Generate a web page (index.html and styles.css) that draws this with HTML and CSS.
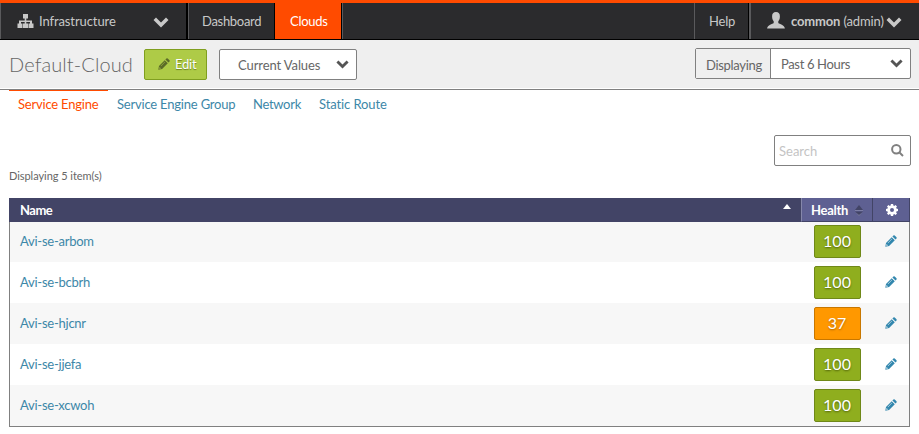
FILE: index.html
```html
<!DOCTYPE html>
<html lang="en">
<head>
<meta charset="utf-8">
<title>Default-Cloud</title>
<link rel="stylesheet" href="styles.css">
</head>
<body>
<svg class="defs" width="0" height="0">
  <symbol id="pencil" viewBox="0 0 12 12"><path fill-rule="evenodd" d="M.3 11.700 1 7.900 6.700 2.200 9.800 5.300 4.100 11zM1.600 9 1.300 10.700 3 10.400zM7.400 1.500 8.400.5Q9.100 0 9.700.5L11.500 2.300Q12 2.900 11.500 3.600L10.500 4.600zM3 8.200 7.100 4.100 6.800 3.800 2.700 7.900z"/></symbol>
  <symbol id="chevron" viewBox="0 0 16 11"><path d="M.5 3 3 .5 8 5.4 13 .5 15.500 3 8 10.500z"/></symbol>
</svg>
<nav class="nav">
  <div class="nav-item infra">
    <svg class="tree" width="17" height="14" viewBox="0 0 17 14"><path d="M6 0h5v4.500H9.300V6.500H15v3h1.500V14h-5V9.500h1.500V8H9.300v1.500H11V14H6V9.500h1.700V8H4v1.500h1.500V14h-5V9.500H2v-3h5.700v-2H6z"/></svg>
    <span class="t-infra">Infrastructure</span>
    <svg class="chev" width="16" height="11"><use href="#chevron"/></svg>
  </div>
  <div class="nav-item dash"><span class="t-dash">Dashboard</span></div>
  <div class="nav-item active"><span class="t-clouds">Clouds</span></div>
  <div class="nav-item filler"></div>
  <div class="nav-item help"><span>Help</span></div>
  <div class="nav-item user">
    <svg class="person" width="18" height="17" viewBox="0 0 18 17"><path d="M9 0C11.600 0 13 1.700 12.900 4.500 12.900 7 12 8.200 11.300 9.200V11C12.500 12.300 17.500 12.700 17.900 16.500H.1C.5 12.700 5.500 12.300 6.700 11V9.200C6 8.200 5.100 7 5.100 4.500 5 1.700 6.400 0 9 0z"/></svg>
    <span class="t-user"><b>common</b> (admin)</span>
    <svg class="chev" width="16" height="11"><use href="#chevron"/></svg>
  </div>
</nav>
<header class="bar">
  <h1>Default-Cloud</h1>
  <button class="edit"><svg width="12" height="12"><use href="#pencil"/></svg><span>Edit</span></button>
  <div class="select values"><span>Current Values</span><svg width="13" height="9"><use href="#chevron"/></svg></div>
  <div class="select range"><label>Displaying</label><span>Past 6 Hours</span><svg width="13" height="9"><use href="#chevron"/></svg></div>
</header>
<div class="tabs">
  <a class="tab current">Service Engine</a>
  <a class="tab group">Service Engine Group</a>
  <a class="tab network">Network</a>
  <a class="tab route">Static Route</a>
</div>
<main>
  <div class="search"><span>Search</span><svg width="13" height="13" viewBox="0 0 13 13"><circle cx="5.300" cy="5.300" r="4.200"/><path d="m8.500 8.500 3.500 3.500"/></svg></div>
  <p class="count">Displaying 5 item(s)</p>
  <div class="table">
    <div class="row head">
      <div class="name">Name<svg class="asc" width="8" height="5" viewBox="0 0 8 5"><path d="M0 5 4 0 8 5z"/></svg></div>
      <div class="health"><span>Health</span><svg width="8" height="11" viewBox="0 0 8 11"><path fill="#424466" d="M0 5 4 0 8 5z"/><path fill="#424466" d="M0 6.500h8L4 11z"/><path fill="#8587aa" d="M0 5h8v.7H0zM0 6.800 4 11 8 6.800 4 10z"/></svg></div>
      <div class="act"><svg width="12" height="12" viewBox="0 0 12 12"><path fill-rule="evenodd" d="M4.900 0h2.200l.3 1.600.8.350L9.500 1 11 2.500l-.9 1.300.35.800 1.550.300v2.200l-1.600.3-.3.800.9 1.300L9.500 11l-1.300-.9-.8.350L7.100 12H4.900l-.3-1.600-.8-.3-1.300.9L1 9.500l.9-1.300-.35-.8L0 7.100V4.900l1.600-.3.3-.8L1 2.500 2.500 1l1.300.9.8-.350zM6 4a2 2 0 1 0 0 4 2 2 0 0 0 0-4z"/></svg></div>
    </div>
    <div class="row first"><a class="name">Avi-se-arbom</a><div class="health"><span class="badge">100</span></div><div class="act"><svg width="12" height="12"><use href="#pencil"/></svg></div></div>
    <div class="row"><a class="name">Avi-se-bcbrh</a><div class="health"><span class="badge">100</span></div><div class="act"><svg width="12" height="12"><use href="#pencil"/></svg></div></div>
    <div class="row"><a class="name">Avi-se-hjcnr</a><div class="health"><span class="badge warn">37</span></div><div class="act"><svg width="12" height="12"><use href="#pencil"/></svg></div></div>
    <div class="row"><a class="name">Avi-se-jjefa</a><div class="health"><span class="badge">100</span></div><div class="act"><svg width="12" height="12"><use href="#pencil"/></svg></div></div>
    <div class="row"><a class="name">Avi-se-xcwoh</a><div class="health"><span class="badge">100</span></div><div class="act"><svg width="12" height="12"><use href="#pencil"/></svg></div></div>
  </div>
</main>
</body>
</html>
```
FILE: styles.css
```css
* { box-sizing: border-box; }
body { margin: 0; height: 434px; overflow: hidden; background: #fff; color: #666; font: 13px/18px Lato, sans-serif; }
svg { display: block; flex: none; fill: currentColor; }
span, label, a { white-space: nowrap; }
.defs { position: absolute; }
.nav { display: flex; height: 40px; border-top: 3px solid #ff4b00; border-bottom: 1px solid #000; background: #2b2b2d; color: #c8c8c8; }
.nav-item { display: flex; align-items: center; border-left: 1px solid #5a5a5c; border-right: 1px solid #000; }
.infra { width: 188px; padding-left: 16px; border-right-width: 2px; }
.tree { margin: 0 5px 0 0; }
.t-infra { width: 114px; letter-spacing: -.1px; }
.chev { margin-top: 3px; }
.dash { width: 87px; padding-left: 13px; letter-spacing: -.3px; }
.nav-item.active { width: 67px; padding-left: 14px; background: #ff4b00; color: #fff; border-left-color: #ff4b00; letter-spacing: -.3px; }
.filler { flex: 1; border-right: 0; }
.help { width: 55px; padding-left: 14px; letter-spacing: -.2px; }
.user { width: 170px; padding-left: 16px; border-left-width: 2px; border-right: 0; }
.person { margin-top: -2px; }
.t-user { width: 95px; margin-left: 6px; letter-spacing: -.15px; }
.bar { display: flex; align-items: center; height: 50px; padding: 0 8px 0 9px; background: #efefef; border-bottom: 1px solid #808080; box-shadow: inset 0 -1px #fff; }
h1 { width: 135px; margin: -2px 0 0; font: 300 20px/28px Lato, sans-serif; letter-spacing: .1px; }
.edit { display: flex; align-items: center; width: 63px; height: 31px; padding: 0 0 0 13px; border: 1px solid #809f20; border-radius: 2px; background: #aecb47; color: #fff; font: inherit; text-shadow: 0 1px 1px #6b8220; letter-spacing: -.2px; }
.edit span { margin-top: -2px; }
.edit svg { color: #5c6b28; margin: -2px 5px 0 0; }
.select { display: flex; align-items: center; height: 31px; background: #fff; border: 1px solid #808080; border-radius: 2px; }
.values { width: 138px; margin-left: 12px; padding-left: 18px; }
.values span { width: 98px; letter-spacing: -.1px; }
.range { width: 216px; margin: -2px 0 0 auto; }
.range label { width: 75px; height: 29px; padding: 7px 0 0 10px; background: #efefef; border-right: 1px solid #808080; letter-spacing: -.3px; }
.range span { width: 110px; padding-left: 10px; margin-right: 9px; letter-spacing: -.35px; }
.select svg { color: #555; }
.tabs { display: flex; height: 27px; padding-left: 9px; color: #3d87a8; }
.tab { padding-top: 5px; }
.tab.group { width: 136px; letter-spacing: -.2px; }
.tab.network { width: 66px; letter-spacing: -.3px; }
.tab.route { letter-spacing: -.1px; }
.tab.current { width: 99px; margin-right: 9px; padding: 4px 0 0 9px; border-top: 1px solid #ff4b00; color: #ff4b00; letter-spacing: -.2px; }
main { padding: 18px 9px 0; }
.search { display: flex; align-items: center; justify-content: space-between; width: 137px; height: 31px; margin: 0 -1px 0 auto; padding: 0 6px 0 4px; border: 1px solid #808080; border-radius: 2px; color: #c4c4c4; }
.search svg { fill: none; stroke: #808080; stroke-width: 2; }
.count { margin: 1px 0 13px; font-size: 11px; letter-spacing: -.05px; }
.table { width: 901px; border: solid #808080; border-width: 0 1px 1px; }
.row { display: flex; height: 41px; background: #fff; }
.row:nth-child(even) { background: #f7f7f7; }
.row.first { height: 40px; }
.row.first .health { padding-top: 3px; }
.name { flex: 1; padding: 11px 0 0 10px; color: #3d87a8; letter-spacing: -.25px; }
.row.first .name { padding-top: 10px; }
.row.first .act { padding-top: 13px; }
.health { width: 71px; padding: 4px 0 0 12px; }
.act { width: 36px; padding: 14px 0 0 12px; color: #3287ae; }
.badge { display: block; width: 47px; height: 33px; padding-right: 1px; border: 1px solid #6f8818; border-radius: 2px; background: #8fae1e; color: #fff; font-size: 16px; line-height: 30px; text-align: center; text-shadow: 0 1px 2px #4f6008; }
.badge.warn { background: #ff9800; border-color: #c87700; text-shadow: 0 1px 2px #a86000; }
.head { height: 24px; margin: 0 -1px; background: #424466; color: #fff; font-weight: 700; }
.head > div { border-bottom: 1px solid #424466; }
.head .name { display: flex; justify-content: space-between; padding: 3px 10px 0 11px; color: #fff; letter-spacing: -.5px; }
.asc { margin-top: 3px; }
.head .health { display: flex; justify-content: space-between; width: 72px; padding: 3px 9px 0 9px; border-left: 1px solid #8587aa; border-right: 1px solid #424466; background: #5e6092; letter-spacing: -.3px; }
.head .health svg { margin-top: 4px; }
.head .act { width: 37px; padding: 6px 0 0 13px; border-right: 1px solid #424466; background: #5e6092; color: #fff; }
```
